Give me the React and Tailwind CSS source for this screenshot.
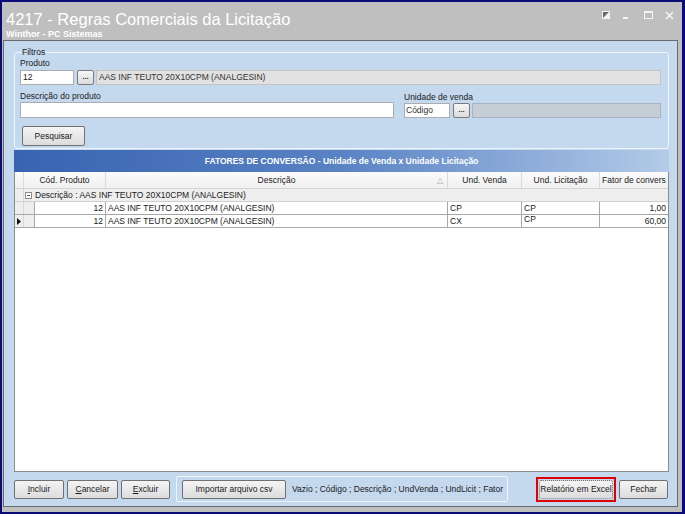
import React from "react";

const Btn = ({ children, className = "" }) => (
  <button
    className={
      "h-[19px] rounded-[2px] border border-[#707070] bg-linear-to-b from-[#f4f4f4] to-[#dcdcdc] text-[8.5px] leading-none text-[#1a1a1a] whitespace-nowrap " +
      className
    }
  >
    {children}
  </button>
);

const Dots = () => (
  <div className="w-[17px] h-[15px] rounded-[2px] border border-[#7a7a7a] bg-linear-to-b from-[#f6f6f6] to-[#dcdcdc] flex items-center justify-center text-[8px] font-bold leading-none text-[#333] pb-[2px]">
    ...
  </div>
);

const rows = [
  { cod: "12", desc: "AAS INF TEUTO 20X10CPM (ANALGESIN)", venda: "CP", lic: "CP", fator: "1,00" },
  { cod: "12", desc: "AAS INF TEUTO 20X10CPM (ANALGESIN)", venda: "CX", lic: "CP", fator: "60,00", current: true },
];

export default function App() {
  return (
    <div className="w-[685px] h-[517px] bg-white font-['Liberation_Sans',Arial,sans-serif] text-[#1a1a1a]">
      <div className="w-[685px] h-[514px] border-2 border-r-[3px] border-[#0b0b78] bg-[#bfbfbf] flex flex-col">
        {/* title bar */}
        <div className="h-[38px] flex justify-between pl-[4px]">
          <div className="pt-[7px] text-white">
            <div className="text-[16.5px] leading-[20px]">4217 - Regras Comerciais da Licitação</div>
            <div className="text-[9px] font-bold leading-[10px]">Winthor - PC Sistemas</div>
          </div>
          <div className="flex items-start pt-[9px] pr-[8px] gap-[10px]">
            <svg width="8" height="8" viewBox="0 0 8 8">
              <rect x="0.5" y="0.5" width="7" height="7" fill="#f4f4f4" stroke="#f4f4f4" />
              <polygon points="1,1 7,1 1,7" fill="#6a6a6a" />
            </svg>
            <svg width="8" height="8" viewBox="0 0 8 8" className="ml-[2px]">
              <rect x="1" y="6" width="5" height="2" fill="#f4f4f4" />
            </svg>
            <svg width="9" height="8" viewBox="0 0 9 8" className="ml-[4px]">
              <rect x="0.5" y="0.5" width="8" height="7" fill="none" stroke="#f4f4f4" />
              <rect x="0" y="0" width="9" height="2" fill="#f4f4f4" />
            </svg>
            <svg width="9" height="9" viewBox="0 0 9 9" className="ml-[2px]">
              <path d="M1 1 L8 8 M8 1 L1 8" stroke="#f4f4f4" strokeWidth="1.6" />
            </svg>
          </div>
        </div>

        {/* content */}
        <div className="flex-1 pl-[1px] pr-[4px] pb-[5px] flex">
          <div className="flex-1 bg-[#c4d8ee] border border-[#6a6a6a] flex flex-col">
            {/* filtros */}
            <fieldset className="ml-[10px] mt-[6px] w-[655px] border border-[#eef4fb] rounded-[3px] pl-[5px] pr-[7px] pb-[2px] text-[8.5px]">
              <legend className="ml-[2px] leading-[10px] text-[#222]">Filtros</legend>
              <div className="leading-[10px] mt-[1px]">Produto</div>
              <div className="flex items-center mt-[2px] h-[15px]">
                <div className="w-[54px] h-[15px] bg-white border border-[#abadb3] pl-[2px] leading-[13px]">12</div>
                <div className="ml-[3px]"><Dots /></div>
                <div className="ml-[2px] flex-1 h-[15px] bg-[#e1e1e1] border border-[#c3c3c3] pl-[2px] leading-[13px] text-[#333]">
                  AAS INF TEUTO 20X10CPM (ANALGESIN)
                </div>
              </div>
              <div className="flex mt-[5px]">
                <div className="w-[374px]">
                  <div className="leading-[10px] mt-[1px]">Descrição do produto</div>
                  <div className="h-[16px] bg-white border border-[#abadb3] mt-[1px]" />
                </div>
                <div className="ml-[10px] flex-1">
                  <div className="leading-[10px] mt-[2px]">Unidade de venda</div>
                  <div className="flex items-center h-[15px] mt-[1px]">
                    <div className="w-[46px] h-[15px] bg-white border border-[#abadb3] pl-[1px] leading-[13px] text-[#333]">Código</div>
                    <div className="ml-[3px]"><Dots /></div>
                    <div className="ml-[2px] flex-1 h-[15px] bg-[#c5cdd6] border border-[#aab4bf]" />
                  </div>
                </div>
              </div>
              <div className="mt-[8px] pl-[2px]">
                <Btn className="w-[63px] h-[20px]">Pesquisar</Btn>
              </div>
            </fieldset>

            {/* blue header */}
            <div className="ml-[10px] mt-[1px] w-[655px] h-[22px] bg-linear-to-r from-[#3763b0] via-[#5a83c4] to-[#b4cbe8] flex items-center justify-center text-white font-bold text-[8.5px]">
              FATORES DE CONVERSÃO - Unidade de Venda x Unidade Licitação
            </div>

            {/* grid */}
            <div className="ml-[10px] w-[655px] flex-1 bg-white border border-[#8c8c8c] border-t-0 text-[8.5px] overflow-hidden">
              <div className="grid grid-cols-[9px_82px_342px_74px_78px_68px] h-[17px] bg-linear-to-b from-[#fbfbfb] to-[#f0f0f0] border-b border-[#d4d4d4]">
                <div className="border-r border-[#dadada]" />
                <div className="border-r border-[#dadada] flex items-center justify-center">Cód. Produto</div>
                <div className="border-r border-[#dadada] flex items-center justify-center relative">
                  Descrição
                  <span className="absolute right-[4px] top-[3px] text-[8px] text-[#aaa]">△</span>
                </div>
                <div className="border-r border-[#dadada] flex items-center justify-center">Und. Venda</div>
                <div className="border-r border-[#dadada] flex items-center justify-center">Und. Licitação</div>
                <div className="flex items-center pl-[2px] whitespace-nowrap overflow-hidden">Fator de convers</div>
              </div>
              <div className="flex h-[13px] bg-[#eeeeee] border-b border-[#d0d0d0]">
                <div className="w-[9px] border-r border-[#d8d8d8]" />
                <div className="flex items-center pl-[1px]">
                  <span className="w-[7px] h-[7px] border border-[#8c8c8c] bg-white flex items-center justify-center mr-[3px]">
                    <span className="w-[3px] h-px bg-[#555]" />
                  </span>
                  Descrição : AAS INF TEUTO 20X10CPM (ANALGESIN)
                </div>
              </div>
              {rows.map((r, i) => (
                <div key={i} className="grid grid-cols-[9px_11px_71px_342px_74px_78px_68px] h-[13px] border-b border-[#a8a8a8]">
                  <div className="bg-[#eeeeee] border-r border-[#d8d8d8] flex items-center justify-center">
                    {r.current && (
                      <svg width="4" height="7" viewBox="0 0 4 7">
                        <polygon points="0,0 4,3.5 0,7" fill="#111" />
                      </svg>
                    )}
                  </div>
                  <div className="bg-[#eeeeee] border-r border-[#a8a8a8]" />
                  <div className="border-r border-[#a8a8a8] text-right pr-[2px] leading-[12px]">{r.cod}</div>
                  <div className="border-r border-[#a8a8a8] pl-[2px] leading-[12px]">{r.desc}</div>
                  <div className="border-r border-[#a8a8a8] pl-[2px] leading-[12px]">{r.venda}</div>
                  <div className={"border-r border-[#a8a8a8] pl-[2px] " + (r.current ? "leading-[9px]" : "leading-[12px]")}>{r.lic}</div>
                  <div className="text-right pr-[2px] leading-[12px]">{r.fator}</div>
                </div>
              ))}
            </div>

            {/* bottom bar */}
            <div className="h-[34px] flex items-center pl-[10px] text-[8.5px]">
              <Btn className="w-[50px]"><span className="underline">I</span>ncluir</Btn>
              <Btn className="w-[51px] ml-[3px]"><span className="underline">C</span>ancelar</Btn>
              <Btn className="w-[49px] ml-[3px]"><span className="underline">E</span>xcluir</Btn>
              <div className="ml-[6px] w-[332px] h-[26px] border border-[#eef4fb] rounded-[2px] flex items-center pl-[5px]">
                <Btn className="w-[104px]">Importar arquivo csv</Btn>
                <span className="ml-[6px] text-[#222]">Vazio ; Código ; Descrição ; UndVenda ; UndLicit ; Fator</span>
              </div>
              <div className="ml-[28px] border-2 border-[#e00000] p-px">
                <Btn className="w-[74px] h-[18px] border-dotted border-[#2e7fa6]">Relatório em Excel</Btn>
              </div>
              <Btn className="w-[49px] ml-[3px]">Fechar</Btn>
            </div>
          </div>
        </div>
      </div>
    </div>
  );
}
